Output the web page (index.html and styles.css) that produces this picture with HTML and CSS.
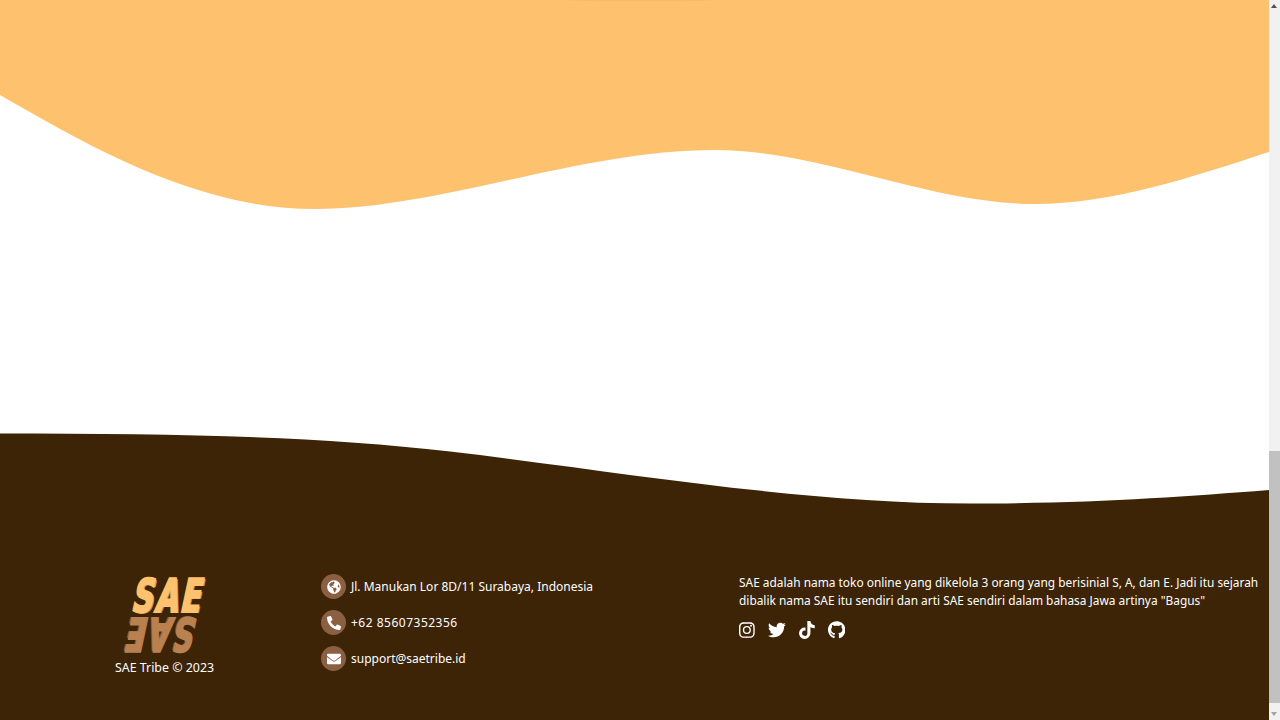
FILE: index.html
```html
<!DOCTYPE html>
<html lang="id">
<head>
<meta charset="utf-8">
<title>SAE Tribe</title>
<link rel="stylesheet" href="styles.css">
</head>
<body>
<div class="page">
  <main class="content">
    <svg class="wave wave-top" viewBox="0 0 1269 209" preserveAspectRatio="none" aria-hidden="true">
      <path class="fill-orange" d="M0 0H1269V152C1190 178 1110 204 1035 204C930 204 820 150 715 150C580 150 440 209 315 209C200 209 95 150 0 95Z"/>
      <ellipse class="fill-shade" cx="640" cy="0" rx="76" ry="1.5"/>
    </svg>
    <div class="spacer"></div>
    <svg class="wave wave-bottom" viewBox="0 0 1269 137" preserveAspectRatio="none" aria-hidden="true">
      <path class="fill-brown" d="M0 .5C180 .5 320 3.5 450 18.500C620 38.500 800 70.500 970 70.500C1090 70.500 1180 64 1269 57V137H0Z"/>
    </svg>
    <footer class="footer">
      <div class="brand">
        <div class="logo">
          <span class="logo-top">SAE</span>
          <span class="logo-bottom">SAE</span>
        </div>
        <p class="copy">SAE Tribe © 2023</p>
      </div>
      <ul class="contacts">
        <li class="contact">
          <span class="badge">
            <svg viewBox="0 0 496 512" class="badge-icon"><path d="M248 8C111.03 8 0 119.03 0 256s111.03 248 248 248 248-111.03 248-248S384.97 8 248 8zm82.29 357.6c-3.9 3.88-7.99 7.95-11.31 11.28-2.99 3-5.1 6.7-6.17 10.71-1.51 5.66-2.73 11.38-4.77 16.87l-17.39 46.85c-13.76 3-28 4.69-42.65 4.69v-27.38c1.69-12.62-7.64-36.26-22.63-51.25-6-6-9.37-14.14-9.37-22.63v-32.01c0-11.64-6.27-22.34-16.46-27.97-14.37-7.95-34.81-19.06-48.81-26.11-11.48-5.78-22.1-13.14-31.65-21.75l-.8-.72a114.792 114.792 0 0 1-18.06-20.74c-9.38-13.77-24.66-36.42-34.59-51.14 20.47-45.5 57.36-82.04 103.2-101.89l24.01 12.01C203.48 89.74 216 82.01 216 70.11v-11.3c7.99-1.29 16.12-2.11 24.45-2.42l28.3 28.3c6.25 6.25 6.25 16.38 0 22.63L264 112l-10.34 10.34c-3.12 3.12-3.12 8.19 0 11.31l4.69 4.69c3.12 3.12 3.12 8.19 0 11.31l-8 8a8.008 8.008 0 0 1-5.66 2.34h-8.99c-2.08 0-4.08.81-5.58 2.27l-9.92 9.65a8.008 8.008 0 0 0-1.58 9.31l15.59 31.19c2.66 5.32-1.21 11.58-7.15 11.58h-5.64c-1.93 0-3.79-.7-5.24-1.96l-9.28-8.06a16.017 16.017 0 0 0-15.55-3.1l-31.17 10.39a11.95 11.95 0 0 0-8.17 11.34c0 4.53 2.56 8.66 6.61 10.69l11.08 5.54c9.41 4.71 19.79 7.16 30.31 7.16s22.59 27.29 32 32h66.75c8.49 0 16.62 3.37 22.63 9.37l13.69 13.69a30.503 30.503 0 0 1 8.93 21.57 46.536 46.536 0 0 1-13.72 32.98zM417 274.25c-5.79-1.45-10.84-5-14.15-9.97l-17.98-26.97a23.97 23.97 0 0 1 0-26.62l19.59-29.38c2.32-3.47 5.5-6.29 9.24-8.15l12.98-6.49C440.2 193.59 448 223.87 448 256c0 8.67-.74 17.16-1.82 25.54L417 274.25z"/></svg>
          </span>
          <span class="contact-text">Jl. Manukan Lor 8D/11 Surabaya, Indonesia</span>
        </li>
        <li class="contact">
          <span class="badge">
            <svg viewBox="0 0 512 512" class="badge-icon"><path transform="matrix(-1 0 0 1 512 0)" d="M493.4 24.6l-104-24c-11.3-2.6-22.9 3.3-27.5 13.9l-48 112c-4.2 9.8-1.4 21.3 6.9 28l60.6 49.6c-36 76.7-98.9 140.5-177.2 177.2l-49.6-60.6c-6.8-8.3-18.2-11.1-28-6.9l-112 48C3.9 366.5-2 378.1.6 389.4l24 104C27.1 504.2 36.7 512 48 512c256.1 0 464-207.5 464-464 0-11.2-7.7-20.9-18.6-23.4z"/></svg>
          </span>
          <span class="contact-text contact-phone">+62 85607352356</span>
        </li>
        <li class="contact">
          <span class="badge">
            <svg viewBox="0 0 512 512" class="badge-icon"><path d="M502 191c4-3 10 0 10 5v204a48 48 0 0 1-48 48H48a48 48 0 0 1-48-48V196c0-5 6-8 10-5 22 17 52 39 154 113 21 15 57 48 92 48s72-33 92-48c102-74 132-96 154-113zM256 320c23 0 56-29 73-41 133-97 143-105 174-129 6-5 9-12 9-19v-19a48 48 0 0 0-48-48H48a48 48 0 0 0-48 48v19c0 7 3 14 9 19 31 24 41 32 174 129 17 12 50 41 73 41z"/></svg>
          </span>
          <span class="contact-text">support@saetribe.id</span>
        </li>
      </ul>
      <div class="about">
        <p class="about-text">SAE adalah nama toko online yang dikelola 3 orang yang berisinial S, A, dan E. Jadi itu sejarah dibalik nama SAE itu sendiri dan arti SAE sendiri dalam bahasa Jawa artinya "Bagus"</p>
        <div class="socials">
          <svg viewBox="0 0 448 512" class="social"><path d="M224 141a115 115 0 1 0 0 230 115 115 0 0 0 0-230zm0 190a75 75 0 1 1 0-150 75 75 0 0 1 0 150zm146-194a27 27 0 1 1-54 0 27 27 0 0 1 54 0zm76 27c-2-36-10-68-36-94s-58-34-94-36c-37-2-148-2-185 0-36 2-68 10-94 36S3 128 1 164c-2 37-2 148 0 185 2 36 10 68 36 94s58 34 94 36c37 2 148 2 185 0 36-2 68-10 94-36s34-58 36-94c2-37 2-148 0-185zm-48 225a76 76 0 0 1-43 43c-30 12-100 9-131 9s-102 3-131-9a76 76 0 0 1-43-43c-12-30-9-100-9-131s-3-102 9-131a76 76 0 0 1 43-43c30-12 100-9 131-9s102-3 131 9a76 76 0 0 1 43 43c12 30 9 100 9 131s3 102-9 131z"/></svg>
          <svg viewBox="0 0 512 512" class="social"><path d="M459 152c0 5 0 9 0 13 0 139-106 299-299 299-59 0-115-17-161-47 8 1 16 1 25 1 49 0 94-17 130-45-46-1-85-31-98-73 6 1 13 2 20 2 9 0 19-1 27-4-48-10-84-52-84-103v-1c14 8 30 13 47 13-28-19-47-51-47-87 0-20 5-37 14-53 52 64 129 105 216 110-2-8-3-16-3-24 0-58 47-105 105-105 30 0 58 13 77 33 24-5 47-14 67-26-8 25-25 46-46 59 21-2 42-8 61-17-14 21-32 40-51 55z"/></svg>
          <svg viewBox="0 0 448 512" class="social"><path d="M448 209a210 210 0 0 1-123-39v178a162 162 0 1 1-140-161v90a75 75 0 1 0 52 71V0h88a121 121 0 0 0 2 22 122 122 0 0 0 54 80 121 121 0 0 0 67 20z"/></svg>
          <svg viewBox="0 0 496 512" class="social"><path d="M165 397c0 2-2 4-5 4-4 0-6-2-6-4s2-4 5-4c3-1 6 1 6 4zm-31-5c-1 2 1 5 4 5 3 1 6 0 6-2 1-2-1-5-4-5-3-1-6 0-6 2zm44-2c-3 1-5 3-5 5 0 2 3 3 6 3 3-1 5-3 5-5 0-2-3-3-6-3zM244 8C106 8 0 113 0 252c0 111 70 206 170 239 13 2 17-6 17-12l0-62s-70 15-85-30c0 0-11-29-28-36 0 0-23-16 2-16 0 0 25 2 39 26 22 39 59 28 73 21 2-16 9-27 16-34-56-6-112-14-112-110 0-27 8-41 24-58-3-7-11-33 2-67 21-7 69 27 69 27 20-6 41-8 62-8s42 3 62 8c0 0 48-34 69-27 14 34 5 60 2 67 16 17 26 31 26 58 0 96-59 104-115 110 9 8 17 23 17 46 0 33 0 75 0 83 0 6 4 14 17 12C428 458 496 363 496 252 496 113 383 8 244 8z"/></svg>
        </div>
      </div>
    </footer>
  </main>
  <aside class="scrollbar" aria-hidden="true">
    <span class="arrow arrow-up"></span>
    <span class="track"><span class="thumb"></span></span>
    <span class="arrow arrow-down"></span>
  </aside>
</div>
</body>
</html>
```

FILE: styles.css
```css
* { box-sizing: border-box; }
html, body { margin: 0; height: 100%; overflow: hidden; background: #fff; }
body { font-family: "Noto Sans", "Open Sans", sans-serif; }
.page { display: flex; width: 1280px; height: 720px; }
.content { width: 1269px; display: flex; flex-direction: column; }
.wave { display: block; width: 1269px; flex: none; }
.wave-top { height: 209px; }
.spacer { height: 224px; flex: none; }
.wave-bottom { height: 137px; }
.fill-orange { fill: #fec26f; }
.fill-shade { fill: #f8bb6c; }
.fill-brown { fill: #3d2406; }
.footer { flex: 1; background: #3d2406; color: #fff; display: flex; align-items: flex-start; margin-top: -1px; font-size: 12px; }
.brand { width: 321px; flex: none; padding-left: 111px; padding-right: 103px; display: flex; flex-direction: column; align-items: center; padding-top: 7px; }
.logo { width: 107px; height: 78px; display: flex; flex-direction: column; align-items: center; font-family: "DejaVu Sans", sans-serif; font-weight: 700; font-stretch: condensed; font-size: 33px; line-height: 39px; }
.logo-top, .logo-bottom { height: 39px; letter-spacing: 2px; -webkit-text-stroke: 1.5px currentColor; white-space: nowrap; }
.logo-top { color: #fec26f; transform: translateX(5px) skewX(-12deg) scaleY(1.4); text-shadow: 2px 1px 0 #cf9455; }
.logo-bottom { color: #b98050; transform: translateX(-4.5px) rotate(180deg) skewX(-12deg) scaleY(1.4); text-shadow: 2px 1px 0 #8b5f42; }
.copy { margin: 5px 0 0; line-height: 18px; white-space: nowrap; font-size: 12.4px; }
.contacts { list-style: none; margin: 5px 0 0; padding: 0; width: 418px; flex: none; display: flex; flex-direction: column; gap: 11px; }
.contact { display: flex; align-items: center; gap: 5px; height: 25px; }
.contact-phone { letter-spacing: .5px; }
.badge { width: 25px; height: 25px; border-radius: 50%; background: #8b5f42; display: flex; align-items: center; justify-content: center; flex: none; }
.badge-icon { width: 14px; height: 14px; fill: #fff; }
.about { flex: 1; padding-top: 5px; }
.about-text { margin: 0; line-height: 17.5px; font-size: 11.9px; }
.socials { display: flex; gap: 13px; margin-top: 12px; }
.social { height: 18px; width: auto; fill: #fff; }
.scrollbar { width: 11px; background: #f1f1f1; display: flex; flex-direction: column; }
.arrow { height: 17px; flex: none; position: relative; }
.arrow::after { content: ""; position: absolute; left: 2px; border-left: 3.5px solid transparent; border-right: 3.5px solid transparent; }
.arrow-up::after { top: 4px; border-bottom: 4px solid #505050; }
.arrow-down::after { bottom: 4px; border-top: 4px solid #a3a3a3; }
.track { flex: 1; display: flex; flex-direction: column; justify-content: flex-end; }
.thumb { height: 252px; background: #c1c1c1; display: block; }
```
